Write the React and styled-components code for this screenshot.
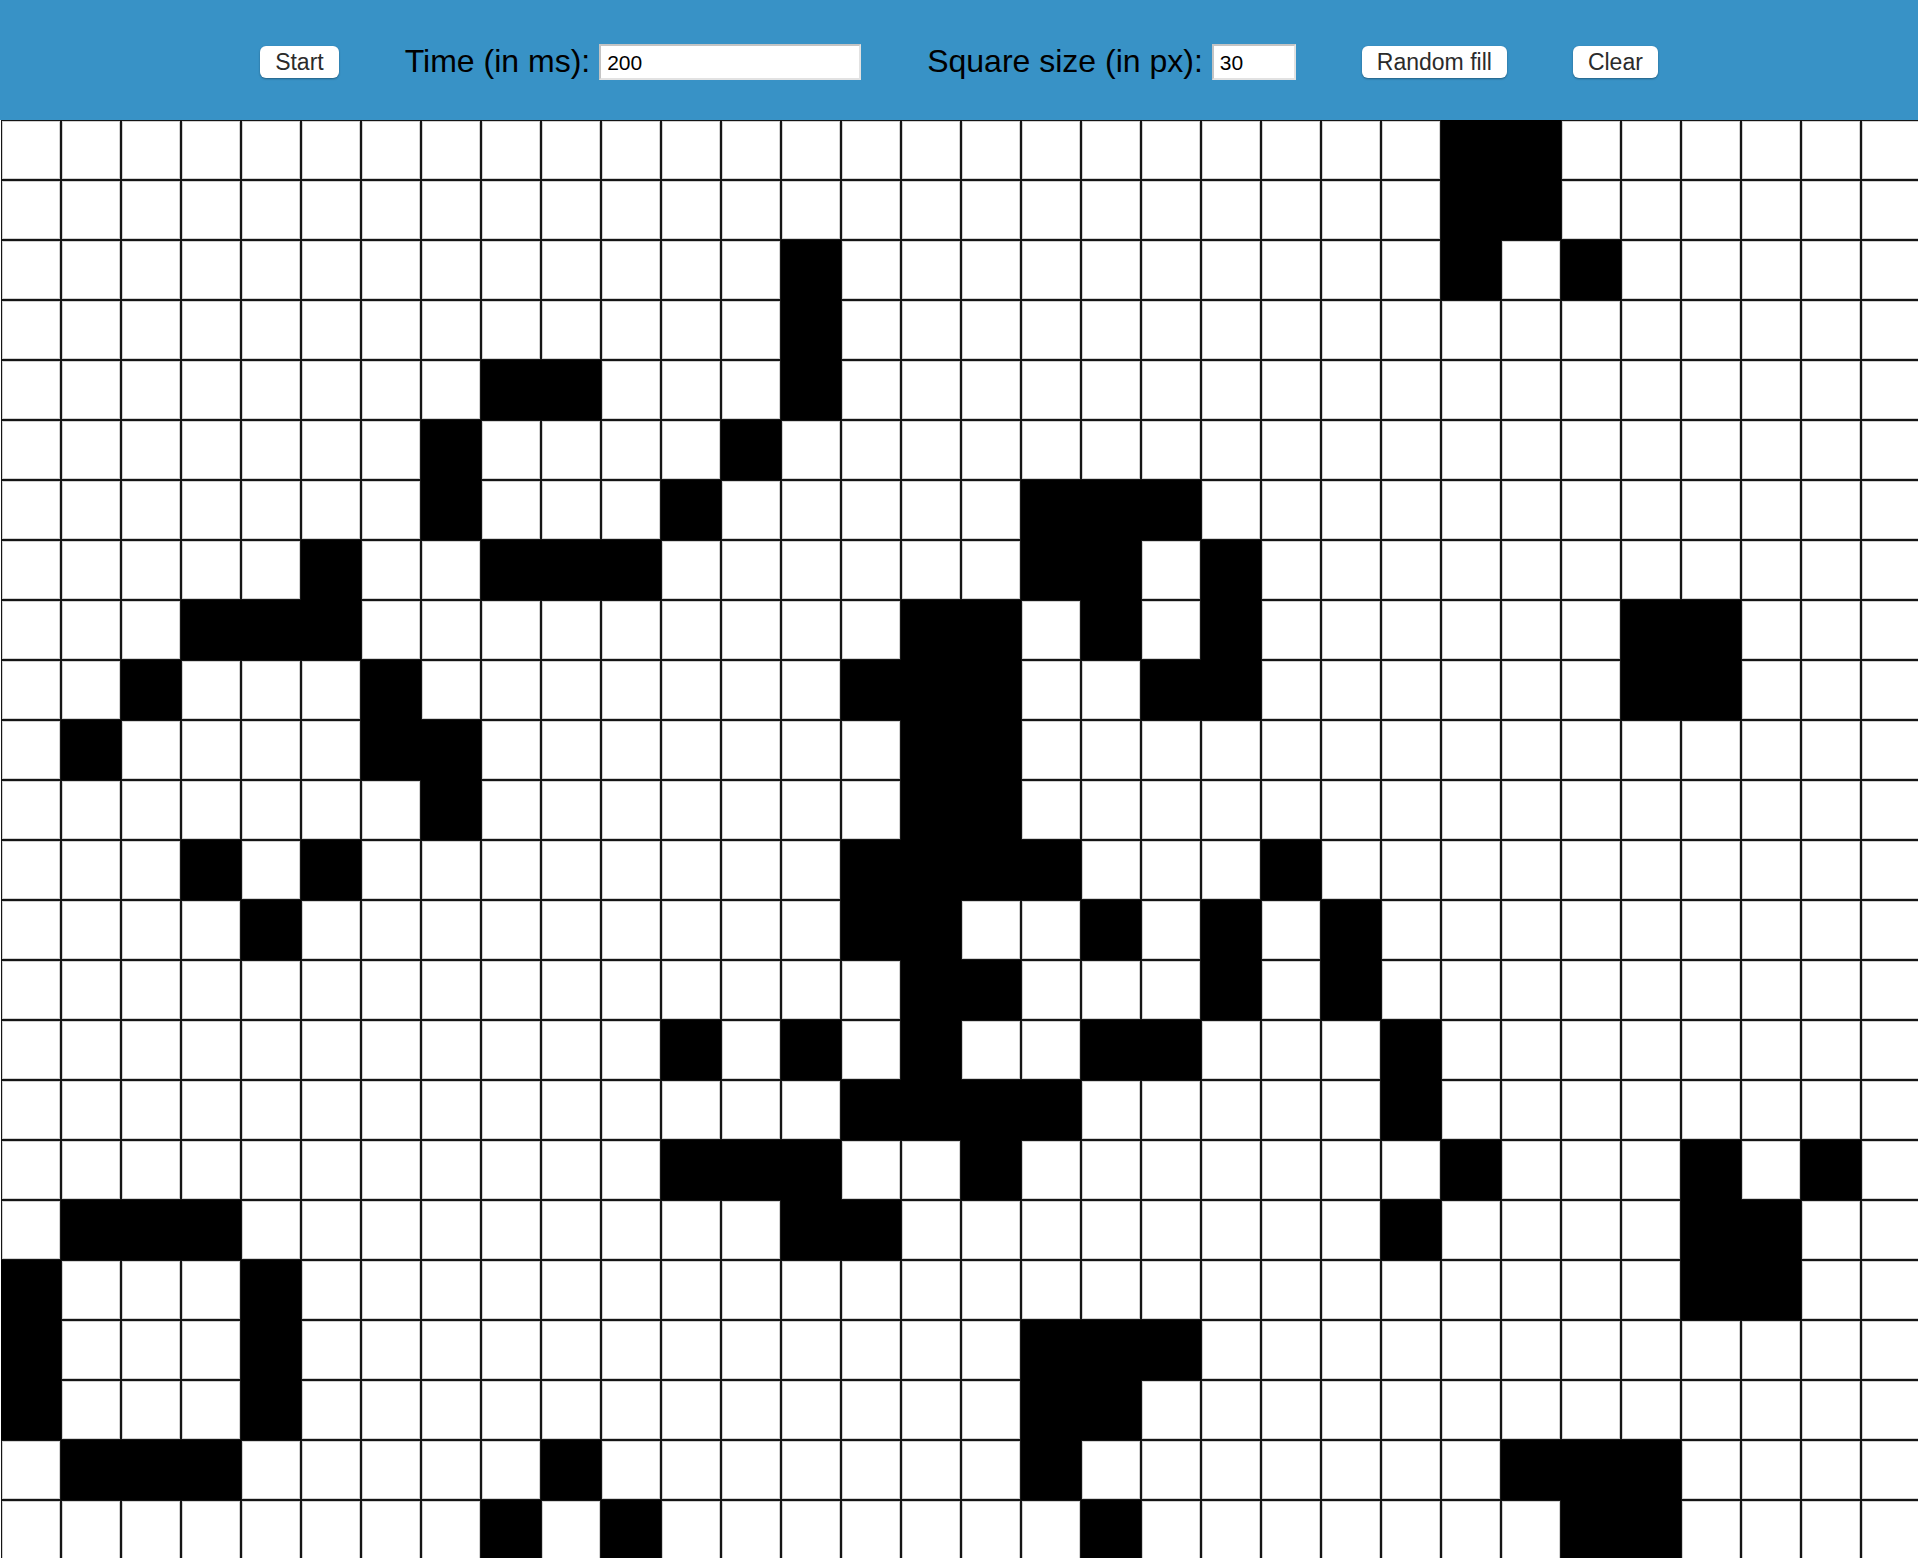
import React from 'react';
import styled, { createGlobalStyle } from 'styled-components';

const COLS = 32;
const ROWS = 24;

// live cells per row, by column index
const LIVE = [
  [24, 25],
  [24, 25],
  [13, 24, 26],
  [13],
  [8, 9, 13],
  [7, 12],
  [7, 11, 17, 18, 19],
  [5, 8, 9, 10, 17, 18, 20],
  [3, 4, 5, 15, 16, 18, 20, 27, 28],
  [2, 6, 14, 15, 16, 19, 20, 27, 28],
  [1, 6, 7, 15, 16],
  [7, 15, 16],
  [3, 5, 14, 15, 16, 17, 21],
  [4, 14, 15, 18, 20, 22],
  [15, 16, 20, 22],
  [11, 13, 15, 18, 19, 23],
  [14, 15, 16, 17, 23],
  [11, 12, 13, 16, 24, 28, 30],
  [1, 2, 3, 13, 14, 23, 28, 29],
  [0, 4, 28, 29],
  [0, 4, 17, 18, 19],
  [0, 4, 17, 18],
  [1, 2, 3, 9, 17, 25, 26, 27],
  [8, 10, 18, 26, 27],
];

const GlobalStyle = createGlobalStyle`
  html, body {
    margin: 0;
    padding: 0;
    overflow: hidden;
    background: #fff;
  }
  body {
    font-family: "Liberation Sans", Arial, sans-serif;
  }
`;

const Page = styled.div`
  width: 100vw;
  height: 100vh;
  overflow: hidden;
`;

const Toolbar = styled.header`
  height: 120px;
  background: #3892c6;
  display: flex;
  align-items: center;
  justify-content: center;
  gap: 66px;
  padding-top: 3px;
  box-sizing: border-box;
`;

const Field = styled.label`
  display: flex;
  align-items: center;
  gap: 9px;
  font-size: 32px;
  color: #000;
`;

const Input = styled.input`
  width: ${(p) => p.$width}px;
  height: 36px;
  box-sizing: border-box;
  border: 2px solid;
  border-color: #c4c4c4 #e2e2e2 #e2e2e2 #c4c4c4;
  background: #fff;
  font-family: "Liberation Sans", Arial, sans-serif;
  font-size: 21px;
  padding: 2px 6px 0;
  color: #000;
  outline: none;
`;

const Button = styled.button`
  height: 32px;
  padding: 0 15px;
  border: none;
  border-radius: 6px;
  background: #fff;
  color: #2b2b2b;
  font-family: "Liberation Sans", Arial, sans-serif;
  font-size: 23px;
  line-height: 32px;
  box-shadow: 0 1px 2px rgba(0, 0, 0, 0.35);
  cursor: pointer;
`;

const Board = styled.div`
  display: grid;
  grid-template-columns: repeat(${COLS}, 60px);
  grid-auto-rows: 60px;
  margin-left: 1px;
`;

const Cell = styled.div`
  box-sizing: border-box;
  border: 1px solid ${(p) => (p.$alive ? '#000' : '#151515')};
  box-shadow: ${(p) => (p.$alive ? 'none' : 'inset 0 0 0 1px rgba(0, 0, 0, 0.18)')};
  background: ${(p) => (p.$alive ? '#000' : '#fff')};
`;

export default function App() {
  const cells = [];
  for (let r = 0; r < ROWS; r++) {
    const live = new Set(LIVE[r]);
    for (let c = 0; c < COLS; c++) {
      cells.push(<Cell key={r + '-' + c} $alive={live.has(c)} />);
    }
  }
  return (
    <Page>
      <GlobalStyle />
      <Toolbar>
        <Button>Start</Button>
        <Field>
          Time (in ms):
          <Input $width={262} defaultValue="200" />
        </Field>
        <Field>
          Square size (in px):
          <Input $width={84} defaultValue="30" />
        </Field>
        <Button>Random fill</Button>
        <Button>Clear</Button>
      </Toolbar>
      <Board>{cells}</Board>
    </Page>
  );
}
